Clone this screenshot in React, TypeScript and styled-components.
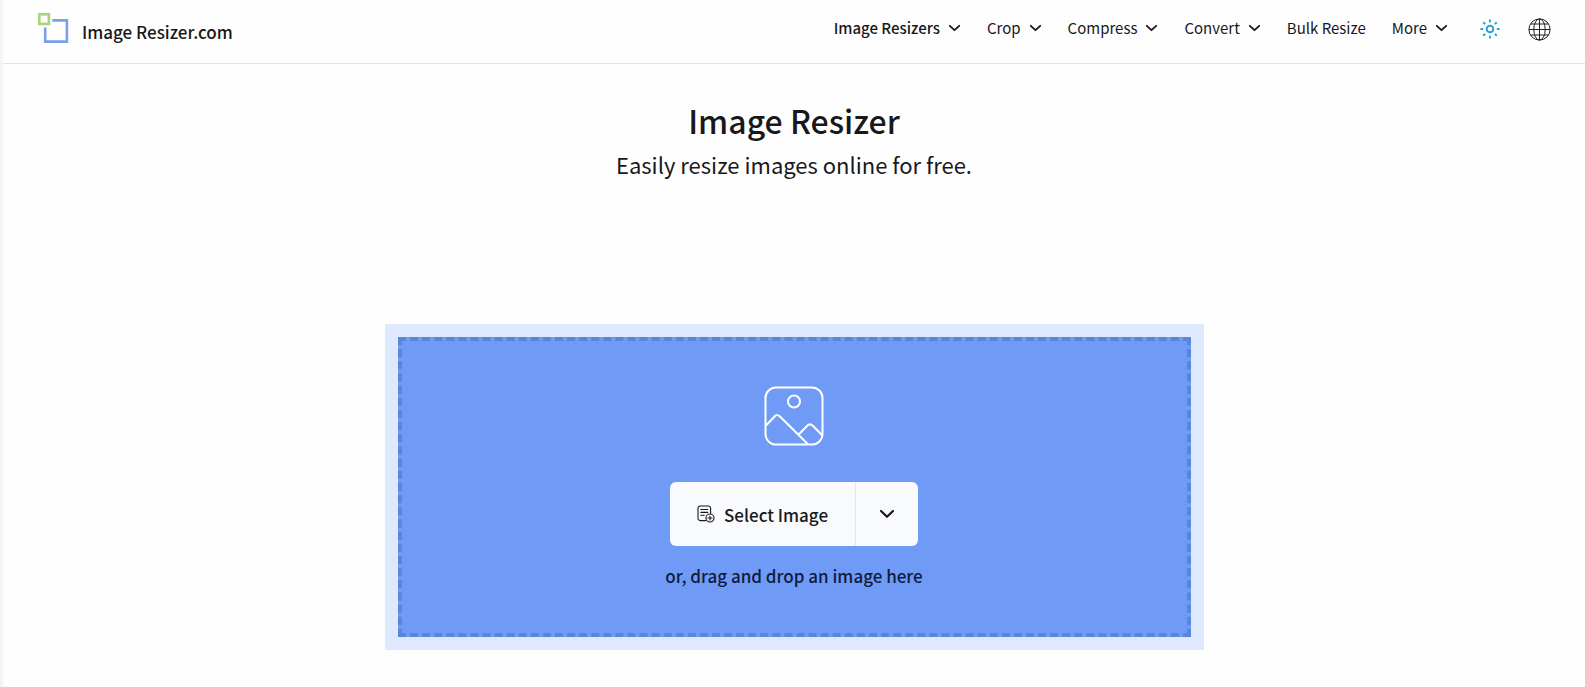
import React from "react";
import styled, { createGlobalStyle } from "styled-components";

const Global = createGlobalStyle`
  * { box-sizing: border-box; }
  body {
    margin: 0;
    background: #fefefe;
    color: #18181b;
    font-family: "Noto Sans CJK SC", "Noto Sans", sans-serif;
    font-size: 16px;
  }
  button { font: inherit; color: inherit; cursor: pointer; }
`;

const Page = styled.div`
  min-height: 100vh;
  border-left: 3px solid #f4f4f6;
`;

const Header = styled.header`
  display: flex;
  align-items: flex-start;
  justify-content: space-between;
  height: 64px;
  padding: 0 34px 0 35px;
  border-bottom: 1px solid #e2e4ea;
`;

const Brand = styled.a`
  display: flex;
  gap: 13px;
  padding-top: 13px;
  color: inherit;
  text-decoration: none;
  font-size: 17px;
  font-weight: 500;
  line-height: 38px;
`;

const Nav = styled.nav`
  display: flex;
  align-items: center;
  gap: 26px;
  height: 56px;
`;

const NavButton = styled.button<{ $active?: boolean }>`
  display: flex;
  align-items: center;
  gap: 8px;
  padding: 0;
  border: 0;
  background: none;
  font-size: 15px;
  line-height: 24px;
  font-weight: ${(p) => (p.$active ? 500 : 400)};
`;

const NavLink = styled.a`
  color: inherit;
  text-decoration: none;
  font-size: 15px;
  line-height: 24px;
`;

const Tools = styled.div`
  display: flex;
  align-items: center;
  gap: 28px;
  padding: 2px 0 0 6px;
`;

const IconButton = styled.button`
  display: flex;
  padding: 0;
  border: 0;
  background: none;
`;

const Main = styled.main`
  display: flex;
  flex-direction: column;
  align-items: center;
  padding: 36px 24px;
`;

const Title = styled.h1`
  margin: 0;
  font-size: 32px;
  font-weight: 500;
  line-height: 40px;
`;

const Subtitle = styled.p`
  margin: 8px 0 0;
  font-size: 22px;
  line-height: 32px;
`;

const DropFrame = styled.section`
  width: 100%;
  max-width: 819px;
  margin-top: 144px;
  padding: 13px;
  background: #dfe9fd;
`;

const DropZone = styled.div`
  display: flex;
  flex-direction: column;
  align-items: center;
  height: 300px;
  padding-top: 45px;
  border: 4px dashed #5b85dd;
  background: #6f9af5;
`;

const SplitButton = styled.div`
  display: flex;
  height: 64px;
  margin-top: 36px;
  border-radius: 6px;
  background: #f8fafc;
`;

const SelectButton = styled.button`
  display: flex;
  align-items: center;
  gap: 9px;
  padding: 0 27px;
  border: 0;
  border-right: 1px solid #e4e7ec;
  background: none;
  font-size: 17px;
  font-weight: 500;
`;

const MenuButton = styled.button`
  display: flex;
  align-items: center;
  justify-content: center;
  width: 62px;
  padding: 0;
  border: 0;
  background: none;
`;

const Hint = styled.p`
  margin: 18px 0 0;
  color: #0f1c3f;
  font-size: 17px;
  font-weight: 500;
  line-height: 24px;
`;

const Chevron = () => (
  <svg width="13" height="8" viewBox="0 0 13 8" fill="none" stroke="currentColor" strokeWidth="1.8" strokeLinecap="round" strokeLinejoin="round" aria-hidden="true">
    <path d="M1.8 1.8 6.5 6.2l4.7-4.4" />
  </svg>
);

const Logo = () => (
  <svg width="31" height="31" viewBox="0 0 31 31" fill="none" aria-hidden="true">
    <path d="M14.3 7.4H28.9V28.6H7.2V14.5" stroke="#7a9fee" strokeWidth="2.6" />
    <rect x="1.3" y="1.3" width="9.6" height="9.6" stroke="#a5d67c" strokeWidth="2.6" />
  </svg>
);

const Sun = () => (
  <svg width="20" height="20" viewBox="0 0 20 20" fill="none" stroke="#24a3d3" strokeWidth="1.9" aria-hidden="true">
    <circle cx="10" cy="10" r="3.3" />
    {[0, 45, 90, 135, 180, 225, 270, 315].map((a) => (
      <path key={a} d="M10 .4v2.8" transform={`rotate(${a} 10 10)`} />
    ))}
  </svg>
);

const Globe = () => (
  <svg width="23" height="23" viewBox="0 0 23 23" fill="none" stroke="#222" strokeWidth="1" aria-hidden="true">
    <circle cx="11.5" cy="11.5" r="10.6" />
    <ellipse cx="11.5" cy="11.5" rx="5.7" ry="10.6" />
    <path d="M11.5.9v21.2M.9 11.5h21.2M2.4 6h18.2M2.4 17h18.2" />
  </svg>
);

const Picture = () => (
  <svg width="60" height="60" viewBox="0 0 60 60" fill="none" stroke="#fff" strokeWidth="2" strokeLinejoin="round" aria-hidden="true">
    <rect x="1.5" y="1.5" width="57" height="57" rx="10.5" />
    <circle cx="30" cy="15.5" r="6" />
    <path d="M2 39.5 10.8 30.3Q13.2 27.8 15.7 30.3L44 58.3M34.5 48.8 43.2 39.8Q46 37 48.8 39.8L58 49" />
  </svg>
);

const FilePlus = () => (
  <svg width="18" height="18" viewBox="0 0 18 18" fill="none" stroke="#18181b" strokeWidth="1.1" strokeLinecap="round" aria-hidden="true">
    <path d="M8.6 15.6H3.2A2.2 2.2 0 0 1 1 13.4V3.2A2.2 2.2 0 0 1 3.2 1h8.2a2.2 2.2 0 0 1 2.2 2.2v5M3.8 4.5h7M3.8 7.4h7M3.8 10.3h3.4" />
    <circle cx="13" cy="13" r="4" />
    <path d="M13 11v4M11 13h4" />
  </svg>
);

const menus = [
  { label: "Image Resizers", menu: true, active: true },
  { label: "Crop", menu: true },
  { label: "Compress", menu: true },
  { label: "Convert", menu: true },
  { label: "Bulk Resize", menu: false },
  { label: "More", menu: true },
];

export default function App() {
  return (
    <Page>
      <Global />
      <Header>
        <Brand href="#">
          <Logo />
          Image Resizer.com
        </Brand>
        <Nav>
          {menus.map((m) =>
            m.menu ? (
              <NavButton key={m.label} type="button" $active={m.active}>
                {m.label}
                <Chevron />
              </NavButton>
            ) : (
              <NavLink key={m.label} href="#">{m.label}</NavLink>
            )
          )}
          <Tools>
            <IconButton type="button" aria-label="Toggle theme"><Sun /></IconButton>
            <IconButton type="button" aria-label="Language"><Globe /></IconButton>
          </Tools>
        </Nav>
      </Header>
      <Main>
        <Title>Image Resizer</Title>
        <Subtitle>Easily resize images online for free.</Subtitle>
        <DropFrame>
          <DropZone>
            <Picture />
            <SplitButton>
              <SelectButton type="button">
                <FilePlus />
                Select Image
              </SelectButton>
              <MenuButton type="button" aria-label="More sources">
                <svg width="16" height="10" viewBox="0 0 16 10" fill="none" stroke="#18181b" strokeWidth="2.2" strokeLinecap="round" strokeLinejoin="round" aria-hidden="true">
                  <path d="M2 2l6 5.8L14 2" />
                </svg>
              </MenuButton>
            </SplitButton>
            <Hint>or, drag and drop an image here</Hint>
          </DropZone>
        </DropFrame>
      </Main>
    </Page>
  );
}
